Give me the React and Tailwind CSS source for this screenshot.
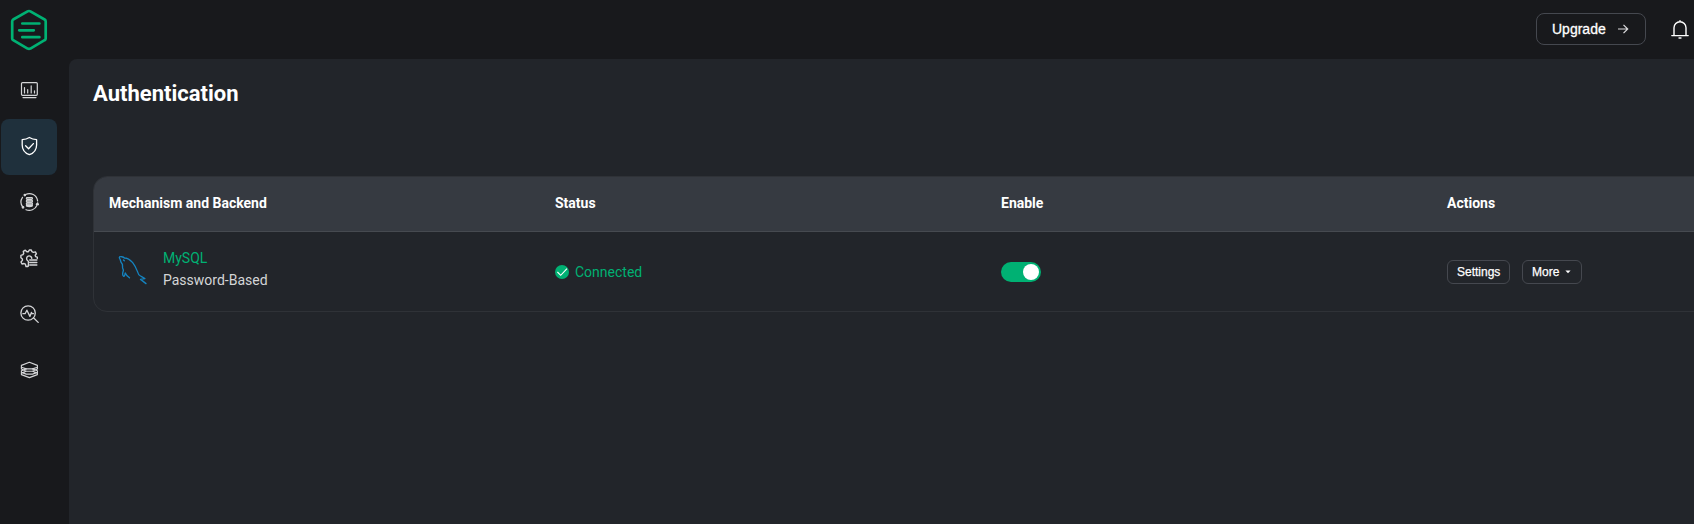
import React from "react";

const icon = {
  viewBox: "0 0 20 20",
  fill: "none",
  stroke: "currentColor",
  strokeLinecap: "round",
  strokeLinejoin: "round",
  className: "h-5 w-5 shrink-0",
};

function Logo() {
  return (
    <svg viewBox="0 0 38 42" className="h-[42px] w-[38px]" fill="none" stroke="#00b173" strokeWidth="2.7" strokeLinecap="round" strokeLinejoin="round">
      <path d="M17.6 2.4 3.2 10.5Q2.2 11.2 2.2 12.4V29.4Q2.2 30.6 3.2 31.2L17.6 39.6Q19 40.2 20.4 39.6L34.6 31.2Q35.7 30.6 35.7 29.4V12.4Q35.7 11.2 34.6 10.5L20.4 2.4Q19 1.6 17.6 2.4Z" />
      <path d="M12.3 14.5H29.4M9.2 21.3H23.8M12.3 28.2H29.4" />
    </svg>
  );
}

function MonitorIcon() {
  return (
    <svg {...icon} strokeWidth="1.2">
      <rect x="2.5" y="2.6" width="15.8" height="12.7" rx="1" />
      <path d="M5.5 13V7.6M8.7 13V9.7M12.2 13V5.8M15.5 13v-2.2M4 17.6h13" />
    </svg>
  );
}

function ShieldIcon() {
  return (
    <svg {...icon} strokeWidth="1.3">
      <path d="M10.4 1.5C8.5 2.7 6 3.5 3.2 3.7v5.2c0 4.6 2.6 8 7.2 9.8 4.6-1.8 7.2-5.2 7.2-9.8V3.7c-2.8-.2-5.3-1-7.2-2.2Z" />
      <path d="m6.6 9.8 3 3 4.8-5.2" />
    </svg>
  );
}

function DatabaseSyncIcon() {
  return (
    <svg {...icon} strokeWidth="1.2">
      <path d="M6.6 2.5A8.3 8.3 0 0 1 18.6 8.9M18 13.2A8.3 8.3 0 0 1 7 17.7M3.7 14.9A8.3 8.3 0 0 1 3.5 5.3" />
      <circle cx="5.8" cy="3.1" r=".7" fill="currentColor" />
      <circle cx="4" cy="15.3" r=".8" fill="currentColor" />
      <path d="m17.2 12.3 1.4-1.5 1 1.9Z" fill="currentColor" />
      <g strokeWidth="1.1" fill="currentColor" fillOpacity=".55">
        <rect x="7.3" y="5.5" width="6.2" height="1.9" rx=".9" />
        <rect x="7.3" y="8.2" width="6.2" height="1.9" rx=".9" />
        <rect x="7.3" y="10.9" width="6.2" height="1.9" rx=".9" />
        <path d="M7.3 13.6c0 1.3 6.2 1.3 6.2 0Z" />
      </g>
    </svg>
  );
}

function GearIcon() {
  return (
    <svg {...icon} strokeWidth="1.4">
      <path d="M9.4 17.7 8.7 18.5H7L6.4 16.2 5.1 15.5 3 16 2 14 3.4 12.4V11L1.9 9.8V7.4L4 6.7 4.7 5.4 4.3 3.4 6.3 2.2 7.9 3.7H9.4L10.3 2H12.3L13 3.7 14.4 4.4 16.4 3.9 17.4 5.8 16.2 7.3 16.6 8.6 18.3 9.2V10.5" />
      <path d="M9.4 17.7v-4.6M8.4 12.4a2.6 2.6 0 1 1 4.4-2" />
      <path d="M10.8 11.9h7M10.8 14.4h7M10.8 16.9h7" strokeWidth="1.5" />
    </svg>
  );
}

function DiagnoseIcon() {
  return (
    <svg {...icon} strokeWidth="1.3">
      <circle cx="9.1" cy="9" r="7.2" />
      <path d="m14.5 13.8 4.7 4.6M3.9 9.7h2.2l1.8-3.5 3 6.2 1.5-4 .6 1.2h1.5" />
    </svg>
  );
}

function LayersIcon() {
  return (
    <svg {...icon} strokeWidth="1.15">
      <path d="M2.4 5.4 10.4 2.3 18.4 5.4V7.2L13.5 8.9H7.3L2.4 7.2Z" />
      <path d="M2.4 7.2V9L7.3 11.2H13.5L18.4 9V7.2M7.3 8.9 2.4 10.8V12.4L7.3 14.1H13.5L18.4 12.4V10.8L13.5 8.9M7.3 11.2 2.4 13.1V14.6L10.4 17.6 18.4 14.6V13.1L13.5 11.2" />
    </svg>
  );
}

function MySqlIcon() {
  return (
    <svg viewBox="0 0 30 30" className="h-[30px] w-[30px]" fill="none" stroke="#1583bf" strokeWidth="1.35" strokeLinecap="round" strokeLinejoin="round">
      <path d="M28 28.6 24.2 25.6 22.5 24.4 26.9 23.6C24.2 21.8 21.9 21 20.8 19.6 19.6 17.8 18.8 12.8 14.7 7.6 10.8 3.4 8.4 3 6.5 3 5.2 1.6 2.4 1.4 1.5 1.9.8 2.6 1.8 3.7 2.3 4.7L3 7.2 4.4 9.3 4.6 12.9 5.4 15.2C4.4 18.4 4.4 20.7 5.8 21.4 7.1 21.4 6.7 19.8 7.3 18L9.1 20.8 11.5 22.8" />
      <path d="m5.5 5 .8.8" />
    </svg>
  );
}

const navItems = [
  { label: "Monitoring", Icon: MonitorIcon },
  { label: "Access Control", Icon: ShieldIcon, active: true },
  { label: "Integration", Icon: DatabaseSyncIcon },
  { label: "Management", Icon: GearIcon },
  { label: "Diagnose", Icon: DiagnoseIcon },
  { label: "System", Icon: LayersIcon },
];

function Sidebar() {
  return (
    <aside className="flex w-[69px] shrink-0 flex-col">
      <div className="flex h-[63px] shrink-0 pt-[9px] pl-[10px]">
        <Logo />
      </div>
      <nav className="flex flex-col pl-px">
        {navItems.map(({ label, Icon, active }) => (
          <a
            key={label}
            aria-label={label}
            className={`flex h-14 w-14 items-center justify-center rounded-lg pb-0.5 ${active ? "bg-[#1f303c] text-white" : "text-[#d4d5d7]"}`}
          >
            <Icon />
          </a>
        ))}
      </nav>
    </aside>
  );
}

function Topbar() {
  return (
    <header className="flex h-[59px] shrink-0 items-center justify-end pr-1 pb-0.5">
      <button className="mr-6 flex h-8 w-[110px] items-center rounded-lg border border-[#45484f] pl-[15px] font-['Liberation_Sans',sans-serif] text-sm text-white [-webkit-text-stroke:0.3px_white]">
        Upgrade
        <svg viewBox="0 0 12 12" className="ml-[11px] h-3 w-3" fill="none" stroke="#dcdcde" strokeWidth="1.2">
          <path d="M1 6h9.6M6.5 1.8 10.7 6l-4.2 4.2" />
        </svg>
      </button>
      <svg viewBox="0 0 20 22" className="h-[22px] w-5" fill="none" stroke="white" strokeWidth="1.4" strokeLinecap="round">
        <path d="M1.8 17.6h16.4M4 17.4V9.8a6 6 0 0 1 12 0v7.6M10 3.5V2.6" />
        <path d="M9.2 20h1.6" strokeWidth="1.8" stroke="#bfc0c2" />
      </svg>
    </header>
  );
}

function ActionButton({ className, children }) {
  return (
    <button className={`flex h-6 items-center rounded-md border border-[#45484f] pl-[9px] font-['Liberation_Sans',sans-serif] text-xs text-white [-webkit-text-stroke:0.25px_white] ${className}`}>
      {children}
    </button>
  );
}

function BackendTable() {
  return (
    <section className="w-[1802px] overflow-hidden rounded-[14px] border border-[#2f3237]">
      <div className="grid h-[55px] grid-cols-[446px_446px_446px_446px] items-center border-b border-[#464a50] bg-[#363a41] pb-0.5 pl-[15px] text-sm font-bold text-white">
        {["Mechanism and Backend", "Status", "Enable", "Actions"].map((title) => (
          <div key={title}>{title}</div>
        ))}
      </div>
      <div className="grid h-[79px] grid-cols-[446px_446px_446px_446px] items-center pl-[15px] text-sm">
        <div className="flex items-center pb-1 pl-[9px]">
          <MySqlIcon />
          <div className="mb-0.5 ml-[15px] leading-[22px]">
            <div className="text-[#00b173]">MySQL</div>
            <div className="text-[#d4d5d7]">Password-Based</div>
          </div>
        </div>
        <div className="flex items-center gap-1.5 text-[#00b173]">
          <svg viewBox="0 0 14 14" className="h-3.5 w-3.5">
            <circle cx="7" cy="7" r="7" fill="#00b173" />
            <path d="m2.4 7 3.3 3.3 6.3-6.6" fill="none" stroke="white" strokeWidth="1.1" />
          </svg>
          Connected
        </div>
        <div>
          <button role="switch" aria-checked="true" className="flex h-5 w-10 items-center justify-end rounded-full bg-[#00b173] pr-0.5">
            <span className="h-4 w-4 rounded-full bg-white" />
          </button>
        </div>
        <div className="flex gap-3">
          <ActionButton className="w-[63px]">Settings</ActionButton>
          <ActionButton className="w-[60px]">
            More
            <svg viewBox="0 0 6 4" className="ml-1.5 h-1 w-1.5" fill="white">
              <path d="M.4.5h5.2L3 3.3Z" />
            </svg>
          </ActionButton>
        </div>
      </div>
    </section>
  );
}

export default function App() {
  return (
    <div className="flex h-[524px] w-full overflow-hidden bg-[#18191c] font-[Roboto,sans-serif]">
      <Sidebar />
      <div className="flex min-w-0 flex-1 flex-col">
        <Topbar />
        <main className="min-h-0 flex-1 overflow-hidden rounded-tl-lg bg-[#22252a] pt-[21px] pl-6">
          <h1 className="mb-[68px] text-[22px] leading-7 font-bold text-white">Authentication</h1>
          <BackendTable />
        </main>
      </div>
    </div>
  );
}
